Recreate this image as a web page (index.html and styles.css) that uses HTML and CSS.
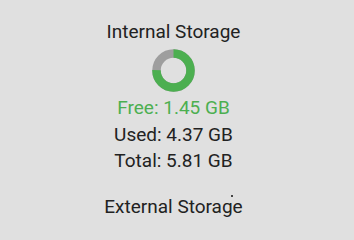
FILE: index.html
```html
<!DOCTYPE html>
<html>
<head>
<meta charset="utf-8">
<link rel="stylesheet" href="styles.css">
</head>
<body>
<main class="page">
  <section class="storage">
    <h2 class="title">Internal Storage</h2>
    <svg class="donut" width="43" height="43" viewBox="0 0 43 43">
      <circle cx="21.5" cy="21.5" r="17" fill="none" stroke="#9e9e9e" stroke-width="8.5"/>
      <circle cx="21.5" cy="21.5" r="17" fill="none" stroke="#4caf50" stroke-width="8.5"
        stroke-dasharray="80.1 106.8" transform="rotate(-90 21.5 21.5)"/>
    </svg>
    <div class="line free">Free: 1.45 GB</div>
    <div class="line">Used: 4.37 GB</div>
    <div class="line">Total: 5.81 GB</div>
  </section>
  <section class="storage external">
    <h2 class="title">External Storage</h2>
  </section>
  <span class="dot"></span>
</main>
</body>
</html>
```
FILE: styles.css
```css
html, body {
  margin: 0;
  padding: 0;
  background: #e0e0e0;
  overflow: hidden;
}
.page {
  position: relative;
  width: 354px;
  height: 224px;
  box-sizing: border-box;
  padding: 18px 7px 0 0;
  font-family: Roboto, "Liberation Sans", sans-serif;
  font-size: 19px;
  color: #222222;
}
.storage {
  display: flex;
  flex-direction: column;
  align-items: center;
}
.title {
  margin: 0;
  font-size: 19px;
  font-weight: 400;
  line-height: 27px;
}
.donut {
  display: block;
  margin: 4px 0 3px;
}
.line {
  line-height: 26.5px;
}
.free {
  color: #4caf50;
}
.external {
  margin-top: 18px;
}
.dot {
  position: absolute;
  left: 230.5px;
  top: 194.5px;
  width: 2px;
  height: 2px;
  border-radius: 50%;
  background: #111;
}
```
